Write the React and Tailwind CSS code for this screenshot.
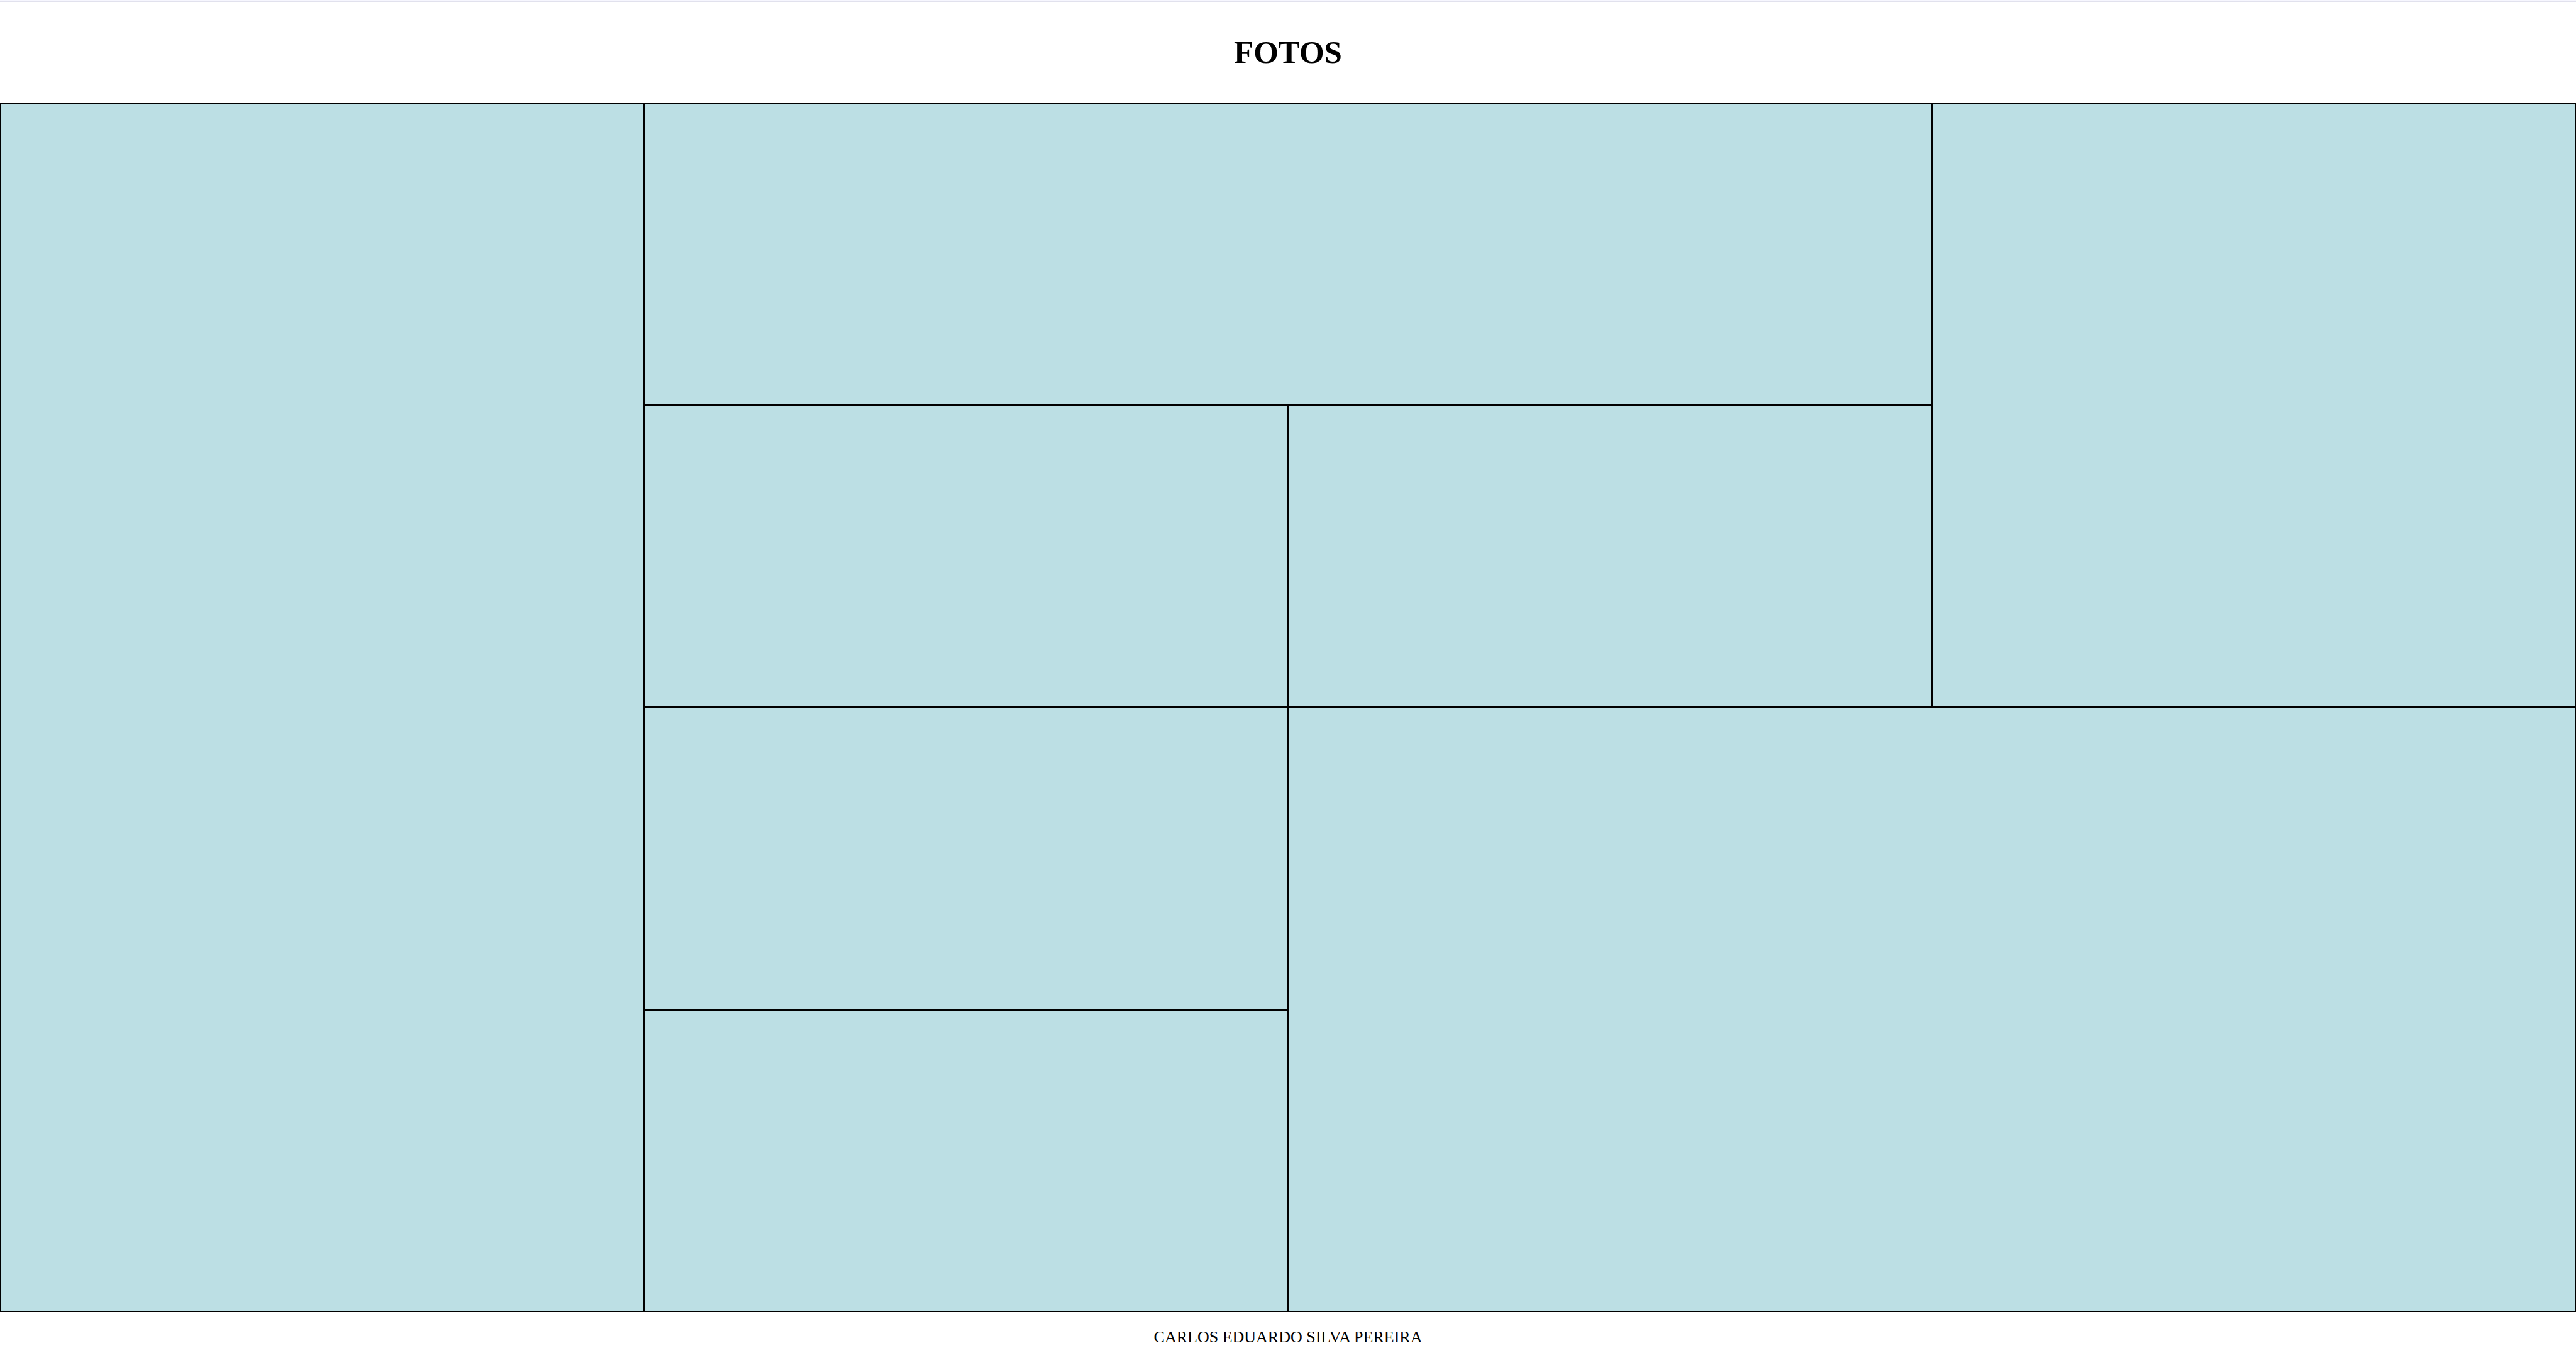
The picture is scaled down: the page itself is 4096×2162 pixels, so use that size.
const photos = [
  { id: 1, area: "row-span-4" },
  { id: 2, area: "col-span-2" },
  { id: 3, area: "row-span-2" },
  { id: 4, area: "" },
  { id: 5, area: "" },
  { id: 6, area: "" },
  { id: 7, area: "col-span-2 row-span-2" },
  { id: 8, area: "" },
];

export default function App() {
  return (
    <div className="flex min-h-screen flex-col bg-white font-['Liberation_Serif',serif] text-black">
      <header className="border-t-2 border-[#f6f6fe]">
        <div className="border-t border-[#e1e1ed] py-12 text-center">
          <h1 className="text-[51px] leading-16 font-bold">FOTOS</h1>
        </div>
      </header>
      <main className="grid flex-1 grid-cols-4 grid-rows-4 gap-[3px] bg-black p-0.5">
        {photos.map(({ id, area }) => (
          <div key={id} className={`bg-[#bcdfe4] ${area}`} />
        ))}
      </main>
      <footer className="pt-6 pb-5 text-center text-[26px] leading-8">
        <p>CARLOS EDUARDO SILVA PEREIRA</p>
      </footer>
    </div>
  );
}
